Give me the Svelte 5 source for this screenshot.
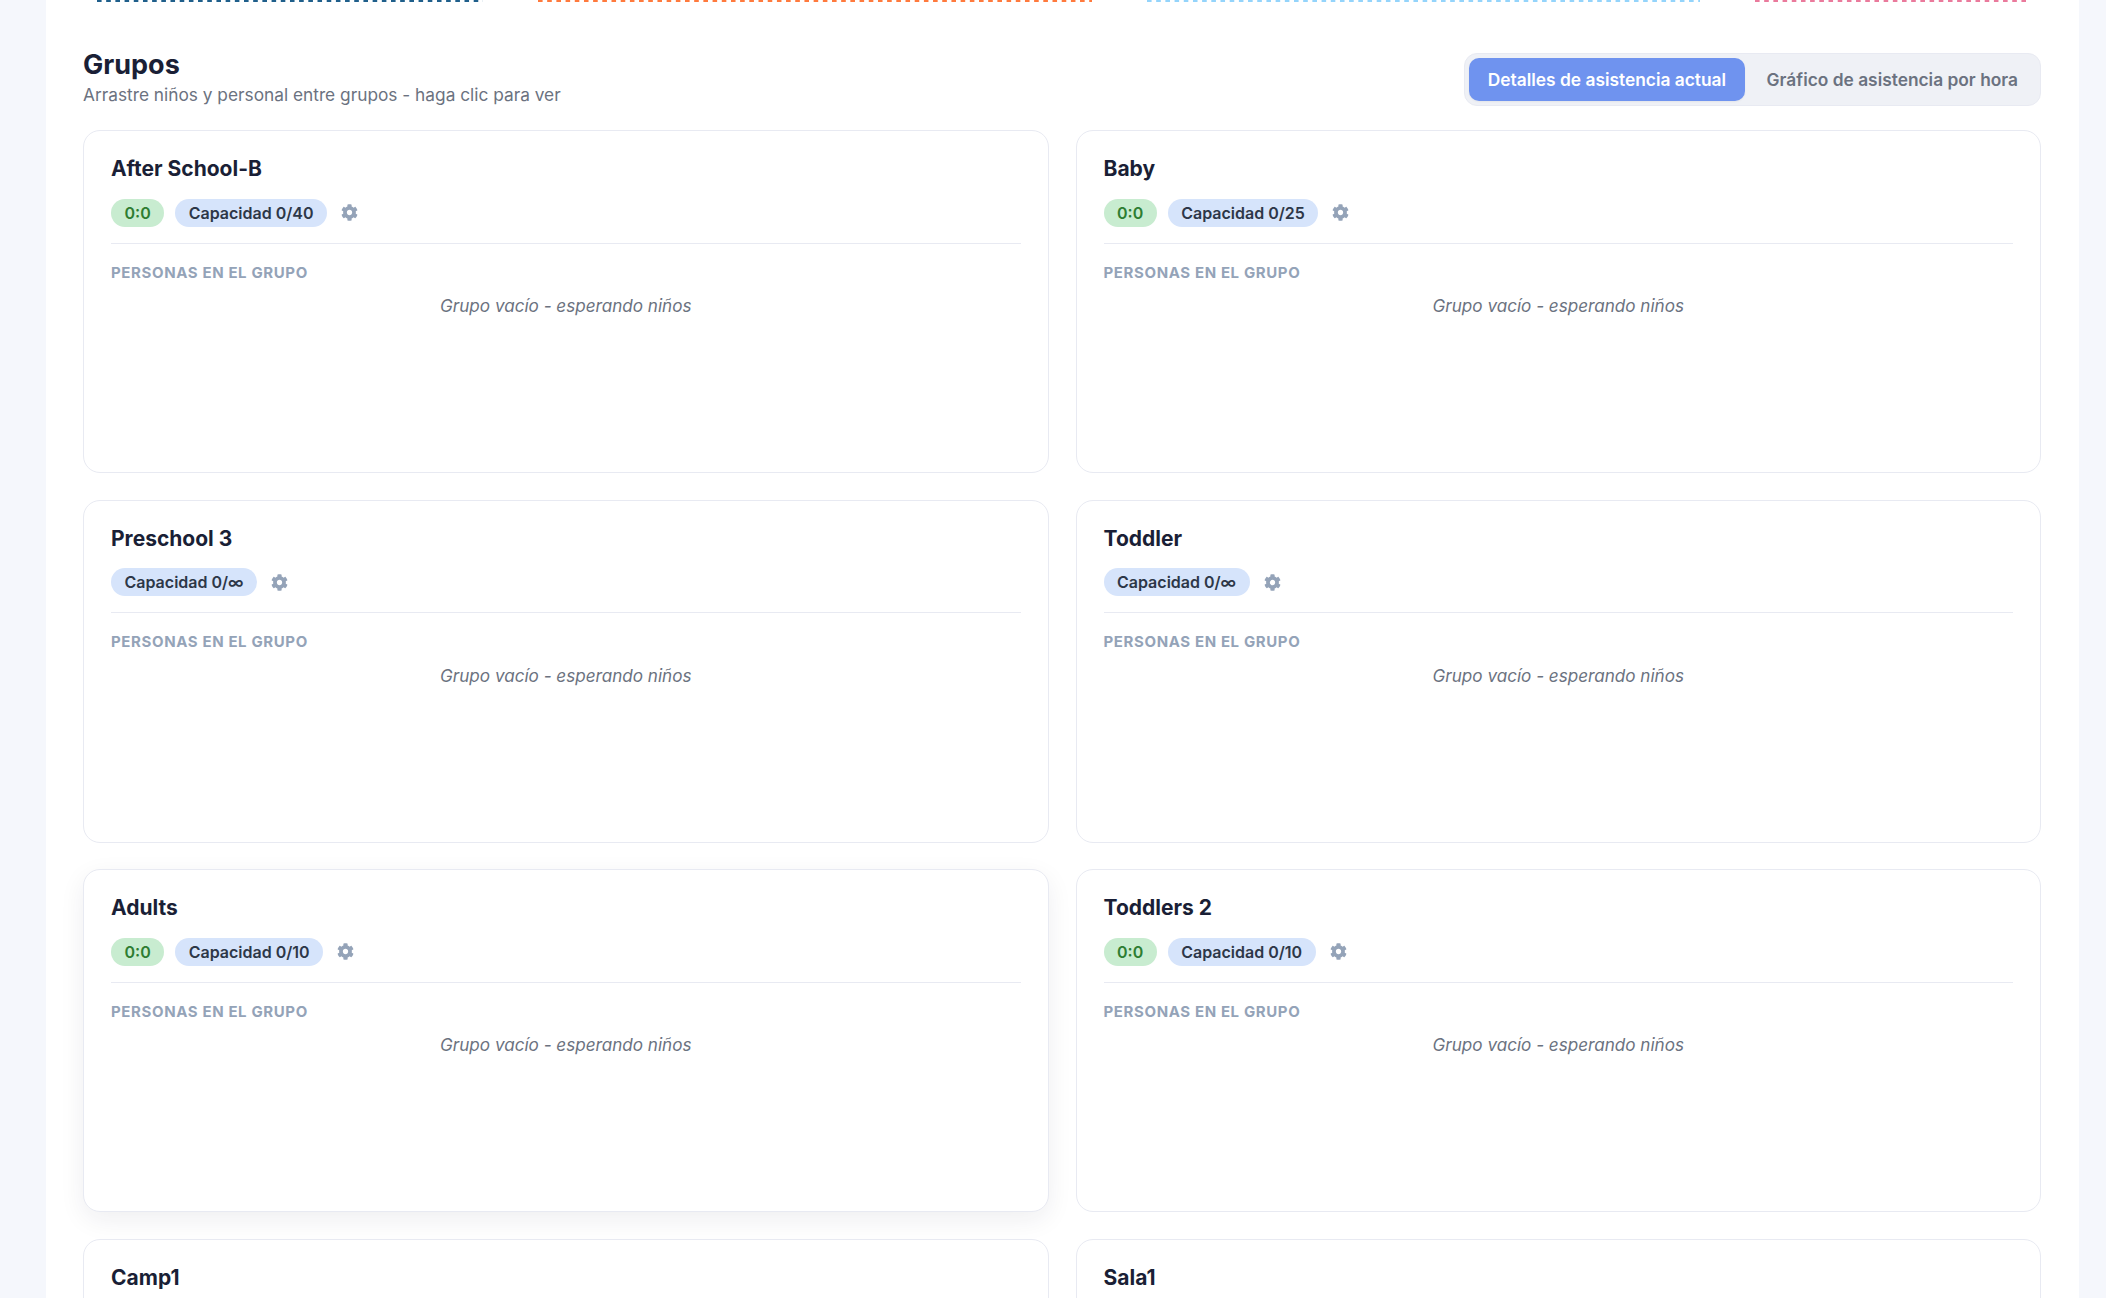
<script>
  const groups = [
    { name: "After School-B", ratio: "0:0", capacity: "0/40" },
    { name: "Baby", ratio: "0:0", capacity: "0/25" },
    { name: "Preschool 3", capacity: "0/∞" },
    { name: "Toddler", capacity: "0/∞" },
    { name: "Adults", ratio: "0:0", capacity: "0/10", hovered: true },
    { name: "Toddlers 2", ratio: "0:0", capacity: "0/10" },
    { name: "Camp1", ratio: "0:0", capacity: "0/10" },
    { name: "Sala1", ratio: "0:0", capacity: "0/10" },
  ];

  let view = "details";
</script>

<main>
  <div class="sheet">
    <div class="strips">
      <span class="strip navy"></span>
      <span class="strip orange"></span>
      <span class="strip sky"></span>
      <span class="strip pink"></span>
    </div>

    <header>
      <div class="heading">
        <h2>Grupos</h2>
        <p>Arrastre niños y personal entre grupos - haga clic para ver</p>
      </div>
      <div class="tabs">
        <button class:active={view === "details"} on:click={() => (view = "details")}>Detalles de asistencia actual</button>
        <button class:active={view === "chart"} on:click={() => (view = "chart")}>Gráfico de asistencia por hora</button>
      </div>
    </header>

    <section class="grid">
      {#each groups as group}
        <article class="card" class:hovered={group.hovered}>
          <h3>{group.name}</h3>
          <div class="meta">
            {#if group.ratio}
              <span class="badge ratio">{group.ratio}</span>
            {/if}
            <span class="badge capacity">Capacidad {group.capacity}</span>
            <svg class="gear" viewBox="0 0 512 512" aria-hidden="true">
              <path d="M487.4 315.7l-42.6-24.6c4.3-23.2 4.3-47 0-70.2l42.6-24.6c4.9-2.8 7.1-8.6 5.5-14-11.1-35.6-30-67.8-54.7-94.6-3.8-4.1-10-5.1-14.8-2.3L380.8 110c-17.9-15.4-38.5-27.3-60.8-35.1V25.8c0-5.6-3.9-10.5-9.4-11.7-36.7-8.2-74.3-7.8-109.2 0-5.5 1.2-9.4 6.1-9.4 11.7V75c-22.2 7.9-42.8 19.8-60.8 35.1L88.7 85.5c-4.9-2.8-11-1.9-14.8 2.3-24.7 26.7-43.6 58.9-54.7 94.6-1.7 5.4.6 11.2 5.5 14L67.3 221c-4.3 23.2-4.3 47 0 70.2l-42.6 24.6c-4.9 2.8-7.1 8.6-5.5 14 11.1 35.6 30 67.8 54.7 94.6 3.8 4.1 10 5.1 14.8 2.3l42.6-24.6c17.9 15.4 38.5 27.3 60.8 35.1v49.2c0 5.6 3.9 10.5 9.4 11.7 36.7 8.2 74.3 7.8 109.2 0 5.5-1.2 9.4-6.1 9.4-11.7v-49.2c22.2-7.9 42.8-19.8 60.8-35.1l42.6 24.6c4.9 2.8 11 1.9 14.8-2.3 24.7-26.7 43.6-58.9 54.7-94.6 1.5-5.5-.7-11.3-5.6-14.1zM256 336c-44.1 0-80-35.9-80-80s35.9-80 80-80 80 35.9 80 80-35.9 80-80 80z" />
            </svg>
          </div>
          <h4>PERSONAS EN EL GRUPO</h4>
          <p class="empty">Grupo vacío - esperando niños</p>
        </article>
      {/each}
    </section>
  </div>
</main>

<style>
  :global(body) {
    background: #f5f7fc;
    font-family: "Inter", "Liberation Sans", sans-serif;
  }

  main {
    height: 100vh;
    overflow: hidden;
    padding: 0 27px 0 46px;
  }

  .sheet {
    background: #fff;
    padding: 0 38px 0 37px;
    min-height: 100%;
  }

  .strips {
    display: grid;
    grid-template-columns: 386px 554px 553px 272px;
    column-gap: 55px;
    margin-left: 14px;
  }

  .strip {
    height: 2px;
    background-size: 9.2px 2px;
    background-repeat: repeat-x;
  }

  .navy {
    background-image: linear-gradient(90deg, #1f5f8b 5px, transparent 5px);
  }
  .orange {
    background-image: linear-gradient(90deg, #ff7a3d 5px, transparent 5px);
  }
  .sky {
    background-image: linear-gradient(90deg, #94d4fb 5px, transparent 5px);
  }
  .pink {
    background-image: linear-gradient(90deg, #ea7a9c 5px, transparent 5px);
  }

  header {
    display: flex;
    justify-content: space-between;
    align-items: flex-start;
    padding-top: 48px;
    height: 128px;
    box-sizing: border-box;
  }

  h2 {
    margin: 0;
    font-size: 27px;
    line-height: 30px;
    font-weight: 700;
    color: #1a1f36;
  }

  header p {
    margin: 2px 0 0;
    font-size: 17.3px;
    line-height: 25px;
    color: #6b7280;
  }

  .tabs {
    display: flex;
    margin-top: 3px;
    padding: 4px;
    background: #eff1f6;
    border: 1px solid #e8eaf2;
    border-radius: 13px;
    box-sizing: border-box;
    height: 53px;
  }

  .tabs button {
    border: none;
    background: none;
    font: inherit;
    font-size: 17.35px;
    font-weight: 600;
    color: #6b7280;
    padding: 0 18px 0 22px;
    border-radius: 10px;
  }

  .tabs button.active {
    background: #6f93ef;
    color: #fff;
    padding: 0 18.5px;
    box-shadow: 0 1px 2px rgba(0, 0, 0, 0.05);
  }

  .grid {
    display: grid;
    grid-template-columns: 1fr 1fr;
    column-gap: 27px;
    row-gap: 26.7px;
    grid-auto-rows: 343px;
  }

  .card {
    background: #fff;
    border: 1.5px solid #e8eaf2;
    border-radius: 17px;
    padding: 23px 27px 0;
    box-sizing: border-box;
    min-width: 0;
  }

  .card.hovered {
    box-shadow: 0 8px 26px rgba(26, 31, 54, 0.07);
  }

  h3 {
    margin: 0;
    font-size: 21px;
    line-height: 30px;
    font-weight: 700;
    color: #1a1f36;
  }

  .meta {
    display: flex;
    align-items: center;
    gap: 11px;
    margin-top: 14.5px;
    padding-bottom: 16px;
    border-bottom: 1.5px solid #e8eaf2;
  }

  .badge {
    height: 28px;
    line-height: 28px;
    border-radius: 14px;
    font-size: 16px;
    font-weight: 600;
    padding: 0 13.5px;
  }

  .ratio {
    background: #c8ecd0;
    color: #2e7d32;
  }

  .capacity {
    background: #d6e4fb;
    color: #2d3748;
  }

  .gear {
    width: 17px;
    height: 17px;
    margin-left: 3px;
    fill: #94a3b8;
  }

  h4 {
    margin: 20px 0 0;
    font-size: 15px;
    line-height: 18px;
    font-weight: 700;
    letter-spacing: 0.62px;
    color: #94a3b8;
  }

  .empty {
    margin: 11.5px 0 0;
    text-align: center;
    font-size: 17.1px;
    line-height: 25px;
    font-style: italic;
    color: #6b7280;
  }
</style>
